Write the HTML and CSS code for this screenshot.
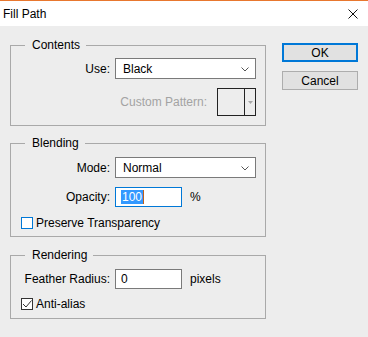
FILE: index.html
```html
<!DOCTYPE html>
<html>
  <head>
    <meta charset="UTF-8" />
    <title>Fill Path</title>
    <link rel="stylesheet" href="styles.css">
  </head>
  <body>
    <div class="titlebar">
      <span class="title">Fill Path</span>
      <svg class="close" width="10" height="10" viewBox="0 0 10 10">
        <path d="M0.5 0.5L9.5 9.5M9.5 0.5L0.5 9.5" stroke="#111" stroke-width="1" fill="none" />
      </svg>
    </div>
    <div class="main">
      <div class="groups">
        <fieldset class="group group-contents">
          <legend>Contents</legend>
          <div class="row row-first">
            <span class="label">Use:</span>
            <div class="select">
              <span>Black</span>
              <svg class="chevron" width="8" height="5" viewBox="0 0 8 5">
                <path d="M0.5 0.5L4 4L7.5 0.5" stroke="#555" fill="none" />
              </svg>
            </div>
          </div>
          <div class="row row-pattern">
            <span class="label-disabled">Custom Pattern:</span>
            <div class="pattern">
              <span class="pattern-swatch"></span>
              <span class="pattern-arrow">
                <svg width="5" height="3" viewBox="0 0 5 3">
                  <path d="M0 0H5L2.5 3Z" fill="#a8a8a8" />
                </svg>
              </span>
            </div>
          </div>
        </fieldset>

        <fieldset class="group group-blending">
          <legend>Blending</legend>
          <div class="row row-first">
            <span class="label">Mode:</span>
            <div class="select">
              <span>Normal</span>
              <svg class="chevron" width="8" height="5" viewBox="0 0 8 5">
                <path d="M0.5 0.5L4 4L7.5 0.5" stroke="#555" fill="none" />
              </svg>
            </div>
          </div>
          <div class="row row-next">
            <span class="label">Opacity:</span>
            <div class="input input-focus"><span class="selected">100</span><span class="caret"></span></div>
            <span class="unit">%</span>
          </div>
          <div class="check-row">
            <span class="checkbox checkbox-focus"></span>
            <span>Preserve Transparency</span>
          </div>
        </fieldset>

        <fieldset class="group group-rendering">
          <legend>Rendering</legend>
          <div class="row row-first">
            <span class="label">Feather Radius:</span>
            <div class="input"><span>0</span></div>
            <span class="unit">pixels</span>
          </div>
          <div class="check-row">
            <span class="checkbox">
              <svg width="10" height="10" viewBox="0 0 10 10">
                <path d="M1 5L4 8L9.5 1.5" stroke="#333" stroke-width="1" fill="none" />
              </svg>
            </span>
            <span>Anti-alias</span>
          </div>
        </fieldset>
      </div>

      <div class="buttons">
        <button class="btn btn-default">OK</button>
        <button class="btn">Cancel</button>
      </div>
    </div>
  </body>
</html>
```

FILE: styles.css
```css
body {
  margin: 0;
  width: 368px;
  height: 337px;
  background-color: #ededed;
  font-family: "Liberation Sans", Arial, sans-serif;
  font-size: 12px;
  color: #000;
  overflow: hidden;
}

.titlebar {
  display: flex;
  align-items: center;
  justify-content: space-between;
  height: 25px;
  border-top: 1px solid #e8772e;
  background-color: #fff;
  padding: 0 10px 0 3px;
}

.title {
  font-size: 12px;
  padding-top: 1px;
}

.close {
  display: block;
  margin-top: 1px;
}

.main {
  display: flex;
  align-items: flex-start;
  padding: 11px 0 0 10px;
}

.groups {
  display: flex;
  flex-direction: column;
  width: 256px;
}

.group {
  margin: 0;
  padding: 0 9px 0 0;
  border: 1px solid #a9a9a9;
  min-inline-size: 0;
}

.group legend {
  margin-left: 14px;
  padding: 0 6px 0 7px;
  line-height: 16px;
  height: 16px;
}

.group-contents {
  padding-bottom: 9px;
}

.group-blending {
  margin-top: 9px;
  padding-bottom: 7px;
}

.group-rendering {
  margin-top: 10px;
  padding-bottom: 8px;
}

.row {
  display: flex;
  align-items: center;
}

.row-first {
  margin-top: 6px;
}

.group-contents .row-first {
  margin-top: 5px;
}

.row-next {
  margin-top: 9px;
}

.label {
  width: 99px;
  text-align: right;
  margin-right: 5px;
}

.select {
  display: flex;
  align-items: center;
  justify-content: space-between;
  box-sizing: border-box;
  width: 141px;
  height: 21px;
  padding: 0 6px 0 7px;
  background-color: #fff;
  border: 1px solid #7a7a7a;
}

.chevron {
  display: block;
  margin-top: 1px;
}

.row-pattern {
  justify-content: flex-end;
  margin-top: 9px;
}

.label-disabled {
  color: #a3a3a3;
  margin-right: 10px;
}

.pattern {
  display: flex;
  box-sizing: border-box;
  width: 39px;
  height: 28px;
  border: 1px solid #222;
}

.pattern-swatch {
  width: 26px;
  border-right: 1px solid #222;
}

.pattern-arrow {
  flex: 1;
  display: flex;
  align-items: center;
  justify-content: center;
}

.pattern-arrow svg {
  display: block;
  margin-top: 1px;
}

.input {
  display: flex;
  align-items: center;
  box-sizing: border-box;
  width: 67px;
  height: 20px;
  padding-left: 5px;
  background-color: #fff;
  border: 1px solid #7a7a7a;
}

.input-focus {
  border-color: #0078d7;
}

.selected {
  background-color: #3399ff;
  color: #fff;
  line-height: 14px;
  padding: 0 1px;
}

.caret {
  width: 1px;
  height: 14px;
  background-color: #c0601a;
}

.unit {
  margin-left: 8px;
}

.check-row {
  display: flex;
  align-items: center;
  margin-top: 10px;
  margin-left: 10px;
  height: 12px;
}

.group-rendering .check-row {
  margin-top: 9px;
}

.checkbox {
  display: flex;
  align-items: center;
  justify-content: center;
  box-sizing: border-box;
  width: 12px;
  height: 12px;
  margin-right: 3px;
  background-color: #fff;
  border: 1px solid #333;
}

.checkbox-focus {
  border-color: #0078d7;
}

.checkbox svg {
  display: block;
}

.buttons {
  display: flex;
  flex-direction: column;
  gap: 9px;
  margin-left: 16px;
  margin-top: 6px;
}

.btn {
  box-sizing: border-box;
  width: 76px;
  height: 19px;
  padding: 0;
  font-family: "Liberation Sans", Arial, sans-serif;
  font-size: 12px;
  color: #000;
  background-color: #e1e1e1;
  border: 1px solid #adadad;
}

.btn-default {
  border: 2px solid #0078d7;
}
```
